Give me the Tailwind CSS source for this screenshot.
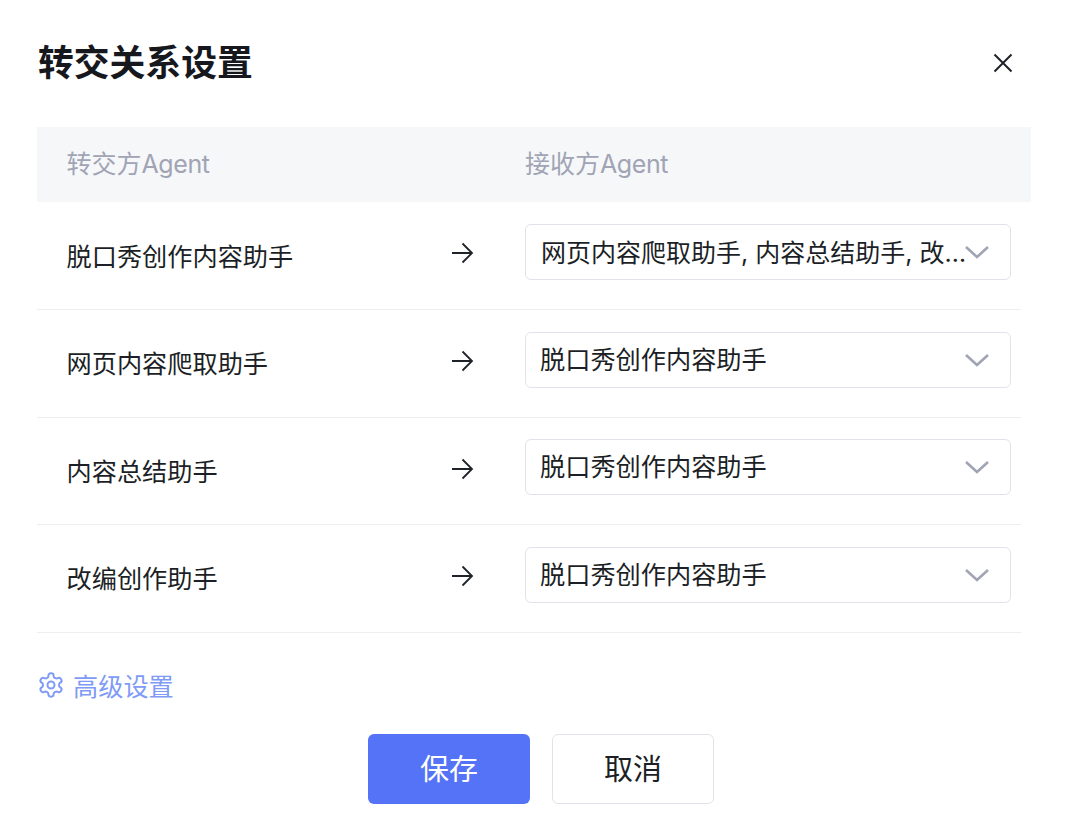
<!DOCTYPE html>
<html lang="zh-CN">
<head>
  <meta charset="UTF-8">
  <title>转交关系设置</title>
  <script src="https://cdn.jsdelivr.net/npm/@tailwindcss/browser@4"></script>
</head>
<body class="w-[1072px] h-[828px] bg-white overflow-hidden font-['Inter','Noto_Sans_CJK_SC',sans-serif] text-[#1c1f26]">
  <div class="pl-[37px] pr-[41px]">
    <div class="h-[127px] flex items-center justify-between">
      <h1 class="text-[35.8px] font-bold leading-none pl-px text-[#16181e]">转交关系设置</h1>
      <button class="w-6 h-6 mr-[16px] mb-[2px] flex items-center justify-center">
        <svg width="24" height="24" viewBox="0 0 24 24" fill="none" stroke="#1f2229" stroke-width="2"><path d="M3.5 3.5 20.5 20.5M20.5 3.5 3.5 20.5"/></svg>
      </button>
    </div>

    <div class="h-[75px] bg-[#f6f7f9] flex items-center text-[25px] text-[#a0a4b4] pl-[29.5px] pt-[1px]">
      <div class="w-[458.5px]">转交方<span class="tracking-[-0.4px]">Agent</span></div>
      <div>接收方<span class="tracking-[-0.4px]">Agent</span></div>
    </div>

    <div class="w-[984px] text-[25.2px]">
      <div class="h-[108px] flex items-start border-b border-[#eceef1] pl-[29.5px]">
        <div class="w-[384.5px] mt-[37px]">脱口秀创作内容助手</div>
        <svg class="w-6 h-6 mr-[50px] mt-[39px] shrink-0" viewBox="0 0 24 24" fill="none" stroke="#1f2229" stroke-width="1.8"><path d="M1 12H21.5M11.5 2.5 21 12 11.5 21.5"/></svg>
        <div class="w-[486px] h-[56px] mt-[22px] shrink-0 rounded-[6px] border border-[#e2e3ea] flex items-center pl-[15px] pr-[21px]">
          <span class="w-[428px] -mr-[4px] truncate pt-[3px] text-[25px]">网页内容爬取助手, 内容总结助手, 改编创作助手</span>
          <svg class="w-6 h-3.5 shrink-0" viewBox="0 0 24 14" fill="none" stroke="#a0a4b4" stroke-width="2.6"><path d="M1 2 12 12 23 2"/></svg>
        </div>
      </div>
      <div class="h-[108px] flex items-start border-b border-[#eceef1] pl-[29.5px]">
        <div class="w-[384.5px] mt-[36px]">网页内容爬取助手</div>
        <svg class="w-6 h-6 mr-[50px] mt-[39px] shrink-0" viewBox="0 0 24 24" fill="none" stroke="#1f2229" stroke-width="1.8"><path d="M1 12H21.5M11.5 2.5 21 12 11.5 21.5"/></svg>
        <div class="w-[486px] h-[56px] mt-[22px] shrink-0 rounded-[6px] border border-[#e2e3ea] flex items-center pl-[14px] pr-[21px]">
          <span class="w-[425px] truncate pt-[2px]">脱口秀创作内容助手</span>
          <svg class="w-6 h-3.5 shrink-0" viewBox="0 0 24 14" fill="none" stroke="#a0a4b4" stroke-width="2.6"><path d="M1 2 12 12 23 2"/></svg>
        </div>
      </div>
      <div class="h-[107px] flex items-start border-b border-[#eceef1] pl-[29.5px]">
        <div class="w-[384.5px] mt-[36px]">内容总结助手</div>
        <svg class="w-6 h-6 mr-[50px] mt-[39px] shrink-0" viewBox="0 0 24 24" fill="none" stroke="#1f2229" stroke-width="1.8"><path d="M1 12H21.5M11.5 2.5 21 12 11.5 21.5"/></svg>
        <div class="w-[486px] h-[56px] mt-[21px] shrink-0 rounded-[6px] border border-[#e2e3ea] flex items-center pl-[14px] pr-[21px]">
          <span class="w-[425px] truncate pt-[2px]">脱口秀创作内容助手</span>
          <svg class="w-6 h-3.5 shrink-0" viewBox="0 0 24 14" fill="none" stroke="#a0a4b4" stroke-width="2.6"><path d="M1 2 12 12 23 2"/></svg>
        </div>
      </div>
      <div class="h-[108px] flex items-start border-b border-[#eceef1] pl-[29.5px]">
        <div class="w-[384.5px] mt-[36px]">改编创作助手</div>
        <svg class="w-6 h-6 mr-[50px] mt-[39px] shrink-0" viewBox="0 0 24 24" fill="none" stroke="#1f2229" stroke-width="1.8"><path d="M1 12H21.5M11.5 2.5 21 12 11.5 21.5"/></svg>
        <div class="w-[486px] h-[56px] mt-[22px] shrink-0 rounded-[6px] border border-[#e2e3ea] flex items-center pl-[14px] pr-[21px]">
          <span class="w-[425px] truncate pt-[2px]">脱口秀创作内容助手</span>
          <svg class="w-6 h-3.5 shrink-0" viewBox="0 0 24 14" fill="none" stroke="#a0a4b4" stroke-width="2.6"><path d="M1 2 12 12 23 2"/></svg>
        </div>
      </div>
    </div>

    <div class="mt-[39px] h-[32px] flex items-center text-[25.2px] text-[#7f9bf6] gap-[8px]">
      <svg class="w-[28px] h-[28px] mb-[6px] shrink-0" viewBox="0 0 24 24" fill="none" stroke="#7f9bf6" stroke-width="1.7" stroke-linecap="round" stroke-linejoin="round"><path d="M12.22 2h-.44a2 2 0 0 0-2 2v.18a2 2 0 0 1-1 1.73l-.43.25a2 2 0 0 1-2 0l-.15-.08a2 2 0 0 0-2.73.73l-.22.38a2 2 0 0 0 .73 2.73l.15.1a2 2 0 0 1 1 1.72v.51a2 2 0 0 1-1 1.74l-.15.09a2 2 0 0 0-.73 2.73l.22.38a2 2 0 0 0 2.73.73l.15-.08a2 2 0 0 1 2 0l.43.25a2 2 0 0 1 1 1.73V20a2 2 0 0 0 2 2h.44a2 2 0 0 0 2-2v-.18a2 2 0 0 1 1-1.73l.43-.25a2 2 0 0 1 2 0l.15.08a2 2 0 0 0 2.73-.73l.22-.39a2 2 0 0 0-.73-2.73l-.15-.08a2 2 0 0 1-1-1.74v-.5a2 2 0 0 1 1-1.74l.15-.09a2 2 0 0 0 .73-2.73l-.22-.38a2 2 0 0 0-2.73-.73l-.15.08a2 2 0 0 1-2 0l-.43-.25a2 2 0 0 1-1-1.73V4a2 2 0 0 0-2-2z"/><circle cx="12" cy="12" r="3"/></svg>
      <span>高级设置</span>
    </div>

    <div class="mt-[30px] flex justify-center gap-[22px] w-[1008px] text-[29px]">
      <button class="w-[162px] h-[70px] pt-px rounded-[6px] bg-[#5473f7] text-white">保存</button>
      <button class="w-[162px] h-[70px] pt-px rounded-[6px] border border-[#e2e3ea] bg-white">取消</button>
    </div>
  </div>
</body>
</html>
